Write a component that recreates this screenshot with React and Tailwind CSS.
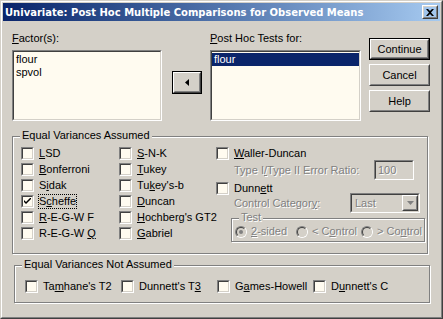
import React from "react";

const FONT = { fontFamily: '"Liberation Sans", Arial, sans-serif' };

const Sunken = ({ className = "", inner = "", children }) => (
  <div className={`border border-t-[#808080] border-l-[#808080] border-b-white border-r-white ${className}`}>
    <div className={`h-full border border-t-[#404040] border-l-[#404040] border-b-[#d4d0c8] border-r-[#d4d0c8] ${inner}`}>
      {children}
    </div>
  </div>
);

const Raised = ({ className = "", def = false, children }) => (
  <div className={`${def ? "border border-black" : ""} ${className}`}>
    <div className="h-full border border-t-white border-l-white border-b-[#404040] border-r-[#404040]">
      <div className="h-full border border-t-[#d4d0c8] border-l-[#d4d0c8] border-b-[#808080] border-r-[#808080] flex items-center justify-center">
        {children}
      </div>
    </div>
  </div>
);

const Check = ({ checked }) => (
  <Sunken className="w-[13px] h-[13px] shrink-0" inner="bg-[#fffbf0] flex items-center justify-center">
    {checked && (
      <svg width="7" height="7" viewBox="0 0 7 7">
        <path d="M0 2 L0 4 L2 6 L7 1 L7 -1 L2 4 Z" fill="#000" />
      </svg>
    )}
  </Sunken>
);

const Box = ({ label, checked, focus }) => (
  <div className="h-[13px] flex items-center gap-[5px]">
    <Check checked={checked} />
    <span className={`leading-[13px] whitespace-nowrap ${focus ? "outline outline-1 outline-dotted outline-black" : ""}`}>{label}</span>
  </div>
);

const Radio = ({ on }) => (
  <div className="w-[12px] h-[12px] rounded-full border border-t-[#808080] border-l-[#808080] border-b-white border-r-white shrink-0">
    <div className="w-full h-full rounded-full border border-t-[#404040] border-l-[#404040] border-b-[#d4d0c8] border-r-[#d4d0c8] bg-[#d4d0c8] flex items-center justify-center">
      {on && <div className="w-[4px] h-[4px] rounded-full bg-[#808080]" />}
    </div>
  </div>
);

const Group = ({ label, className = "", children }) => (
  <div className={`relative border border-[#808080] shadow-[inset_1px_1px_0_#fff,1px_1px_0_#fff] ${className}`}>
    <span className="absolute -top-[8px] left-[7px] px-[2px] bg-[#d4d0c8] leading-[13px] whitespace-nowrap">{label}</span>
    {children}
  </div>
);

const dis = "text-[#808080] [text-shadow:1px_1px_0_#fff]";

export default function App() {
  return (
    <div className="w-[443px] h-[319px] bg-[#d4d0c8] text-[11px] text-black" style={FONT}>
      <div className="h-full border border-t-[#d4d0c8] border-l-[#d4d0c8] border-b-[#404040] border-r-[#404040]">
        <div className="h-full border border-t-white border-l-white border-b-[#808080] border-r-[#808080] p-[1px] flex flex-col">
          {/* title */}
          <div className="h-[18px] bg-linear-to-r from-[#0a246a] to-[#a6caf0] flex items-center justify-between pl-[2px] pr-[2px]">
            <span className="text-white font-bold text-[10px] leading-[13px] whitespace-nowrap" style={{ fontFamily: '"DejaVu Sans", Verdana, sans-serif' }}>
              Univariate: Post Hoc Multiple Comparisons for Observed Means
            </span>
            <Raised className="w-[16px] h-[14px]">
              <svg width="8" height="7" viewBox="0 0 8 7">
                <path d="M0 0 L2 0 L4 2 L6 0 L8 0 L5 3.5 L8 7 L6 7 L4 5 L2 7 L0 7 L3 3.5 Z" fill="#000" />
              </svg>
            </Raised>
          </div>

          {/* top row */}
          <div className="flex items-start">
            <div className="ml-[9px] mt-[11px] w-[150px]">
              <div className="h-[13px] leading-[13px]"><u>F</u>actor(s):</div>
              <Sunken className="mt-[5px] h-[71px]" inner="bg-[#fffbf0] pt-[1px]">
                <div className="h-[13px] leading-[13px] pl-[2px]">flour</div>
                <div className="h-[13px] leading-[13px] pl-[2px]">spvol</div>
              </Sunken>
            </div>
            <Raised def className="ml-[10px] mt-[50px] w-[30px] h-[23px]">
              <svg width="4" height="7" viewBox="0 0 4 7">
                <path d="M4 0 L0 3.5 L4 7 Z" fill="#000" />
              </svg>
            </Raised>
            <div className="ml-[8px] mt-[11px] w-[151px]">
              <div className="h-[13px] leading-[13px]"><u>P</u>ost Hoc Tests for:</div>
              <Sunken className="mt-[5px] h-[71px]" inner="bg-[#fffbf0] pt-[1px]">
                <div className="h-[13px] leading-[13px] pl-[2px] bg-[#0a246a] text-white">flour</div>
              </Sunken>
            </div>
            <div className="ml-[8px] mt-[17px] w-[61px] flex flex-col gap-[4px]">
              <Raised def className="h-[22px]">Continue</Raised>
              <Raised className="h-[22px]">Cancel</Raised>
              <Raised className="h-[22px]">Help</Raised>
            </div>
          </div>

          {/* equal variances assumed */}
          <Group label="Equal Variances Assumed" className="ml-[9px] mt-[15px] w-[416px] h-[118px] flex pl-[8px] pt-[10px]">
            <div className="w-[98px] flex flex-col gap-[3px]">
              <Box label={<><u>L</u>SD</>} />
              <Box label={<><u>B</u>onferroni</>} />
              <Box label={<>S<u>i</u>dak</>} />
              <Box label={<>S<u>c</u>heffe</>} checked focus />
              <Box label={<><u>R</u>-E-G-W F</>} />
              <Box label={<>R-E-G-W <u>Q</u></>} />
            </div>
            <div className="w-[97px] flex flex-col gap-[3px]">
              <Box label={<><u>S</u>-N-K</>} />
              <Box label={<><u>T</u>ukey</>} />
              <Box label={<>Tu<u>k</u>ey's-b</>} />
              <Box label={<><u>D</u>uncan</>} />
              <Box label={<><u>H</u>ochberg's GT2</>} />
              <Box label={<><u>G</u>abriel</>} />
            </div>
            <div className="flex flex-col">
              <Box label={<><u>W</u>aller-Duncan</>} />
              <div className="h-[20px] flex items-center pl-[18px]">
                <span className={`w-[140px] ${dis}`}>Type I<u>/</u>Type II Error Ratio:</span>
                <Sunken className="w-[40px] h-[20px]" inner="flex items-center pl-[2px]">
                  <span className={dis}>100</span>
                </Sunken>
              </div>
              <div className="mt-[2px]">
                <Box label={<>Dunn<u>e</u>tt</>} />
              </div>
              <div className="h-[20px] -mt-[2px] flex items-center pl-[18px]">
                <span className={`w-[116px] ${dis}`}>Control Categor<u>y</u>:</span>
                <Sunken className="w-[70px] h-[20px]" inner="flex items-center justify-between">
                  <span className={`pl-[3px] ${dis}`}>Last</span>
                  <Raised className="w-[16px] h-[16px]">
                    <svg width="7" height="4" viewBox="0 0 7 4">
                      <path d="M0 0 L7 0 L3.5 4 Z" fill="#808080" />
                    </svg>
                  </Raised>
                </Sunken>
              </div>
              <Group label={<span className={dis}>Test</span>} className="ml-[15px] mt-[5px] w-[194px] h-[24px] flex items-center pl-[3px] pt-[3px]">
                <div className="w-[61px] flex items-center gap-[4px]">
                  <Radio on />
                  <span className={dis}><u>2</u>-sided</span>
                </div>
                <div className="w-[65px] flex items-center gap-[4px]">
                  <Radio />
                  <span className={dis}>&lt; C<u>o</u>ntrol</span>
                </div>
                <div className="flex items-center gap-[4px]">
                  <Radio />
                  <span className={dis}>&gt; Co<u>n</u>trol</span>
                </div>
              </Group>
            </div>
          </Group>

          {/* equal variances not assumed */}
          <Group label="Equal Variances Not Assumed" className="ml-[11px] mt-[11px] w-[416px] h-[38px] flex pl-[10px] pt-[14px]">
            <div className="w-[96px]"><Box label={<>Ta<u>m</u>hane's T2</>} /></div>
            <div className="w-[96px]"><Box label={<>Dunnett's T<u>3</u></>} /></div>
            <div className="w-[96px]"><Box label={<>G<u>a</u>mes-Howell</>} /></div>
            <div className="w-[96px]"><Box label={<>D<u>u</u>nnett's C</>} /></div>
          </Group>
        </div>
      </div>
    </div>
  );
}
